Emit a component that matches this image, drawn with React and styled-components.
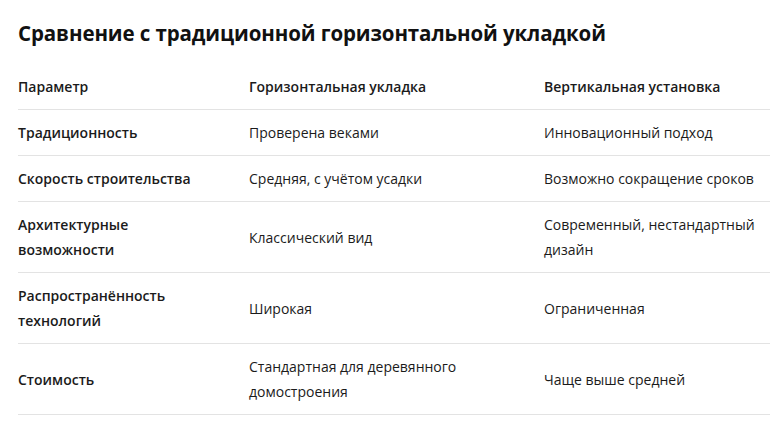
import React from "react";
import styled, { createGlobalStyle } from "styled-components";

const Global = createGlobalStyle`
  html, body { margin: 0; padding: 0; background: #ffffff; }
  body { font-family: "Open Sans", "Noto Sans", "Liberation Sans", sans-serif; color: #1b1b1b; }
`;

const Page = styled.div`
  padding: 16px 10px 0 18px;
  width: 780px;
  box-sizing: border-box;
`;

const Title = styled.h2`
  margin: 0 0 14px;
  font-size: 20.5px;
  line-height: 34px;
  font-weight: 700;
  color: #111;
  letter-spacing: -0.1px;
`;

const Table = styled.div`
  display: grid;
  grid-template-columns: 231px 295px 1fr;
  width: 752px;
`;

const Cell = styled.div`
  display: flex;
  align-items: center;
  padding: 10px ${(p) => (p.$first ? 28 : 12)}px 10px 0;
  border-bottom: 1px solid #e3e3e3;
  font-size: 14px;
  line-height: 25px;
  font-weight: ${(p) => (p.$strong ? 600 : 400)};
  color: #1b1b1b;
`;

const header = ["Параметр", "Горизонтальная укладка", "Вертикальная установка"];
const rows = [
  ["Традиционность", "Проверена веками", "Инновационный подход"],
  ["Скорость строительства", "Средняя, с учётом усадки", "Возможно сокращение сроков"],
  ["Архитектурные возможности", "Классический вид", "Современный, нестандартный дизайн"],
  ["Распространённость технологий", "Широкая", "Ограниченная"],
  ["Стоимость", "Стандартная для деревянного домостроения", "Чаще выше средней"],
];

export default function App() {
  return (
    <Page>
      <Global />
      <Title>Сравнение с традиционной горизонтальной укладкой</Title>
      <Table>
        {header.map((h, i) => (
          <Cell key={h} $strong $first={i === 0}>{h}</Cell>
        ))}
        {rows.map((r) =>
          r.map((c, i) => (
            <Cell key={r[0] + i} $strong={i === 0} $first={i === 0}>{c}</Cell>
          ))
        )}
      </Table>
    </Page>
  );
}
